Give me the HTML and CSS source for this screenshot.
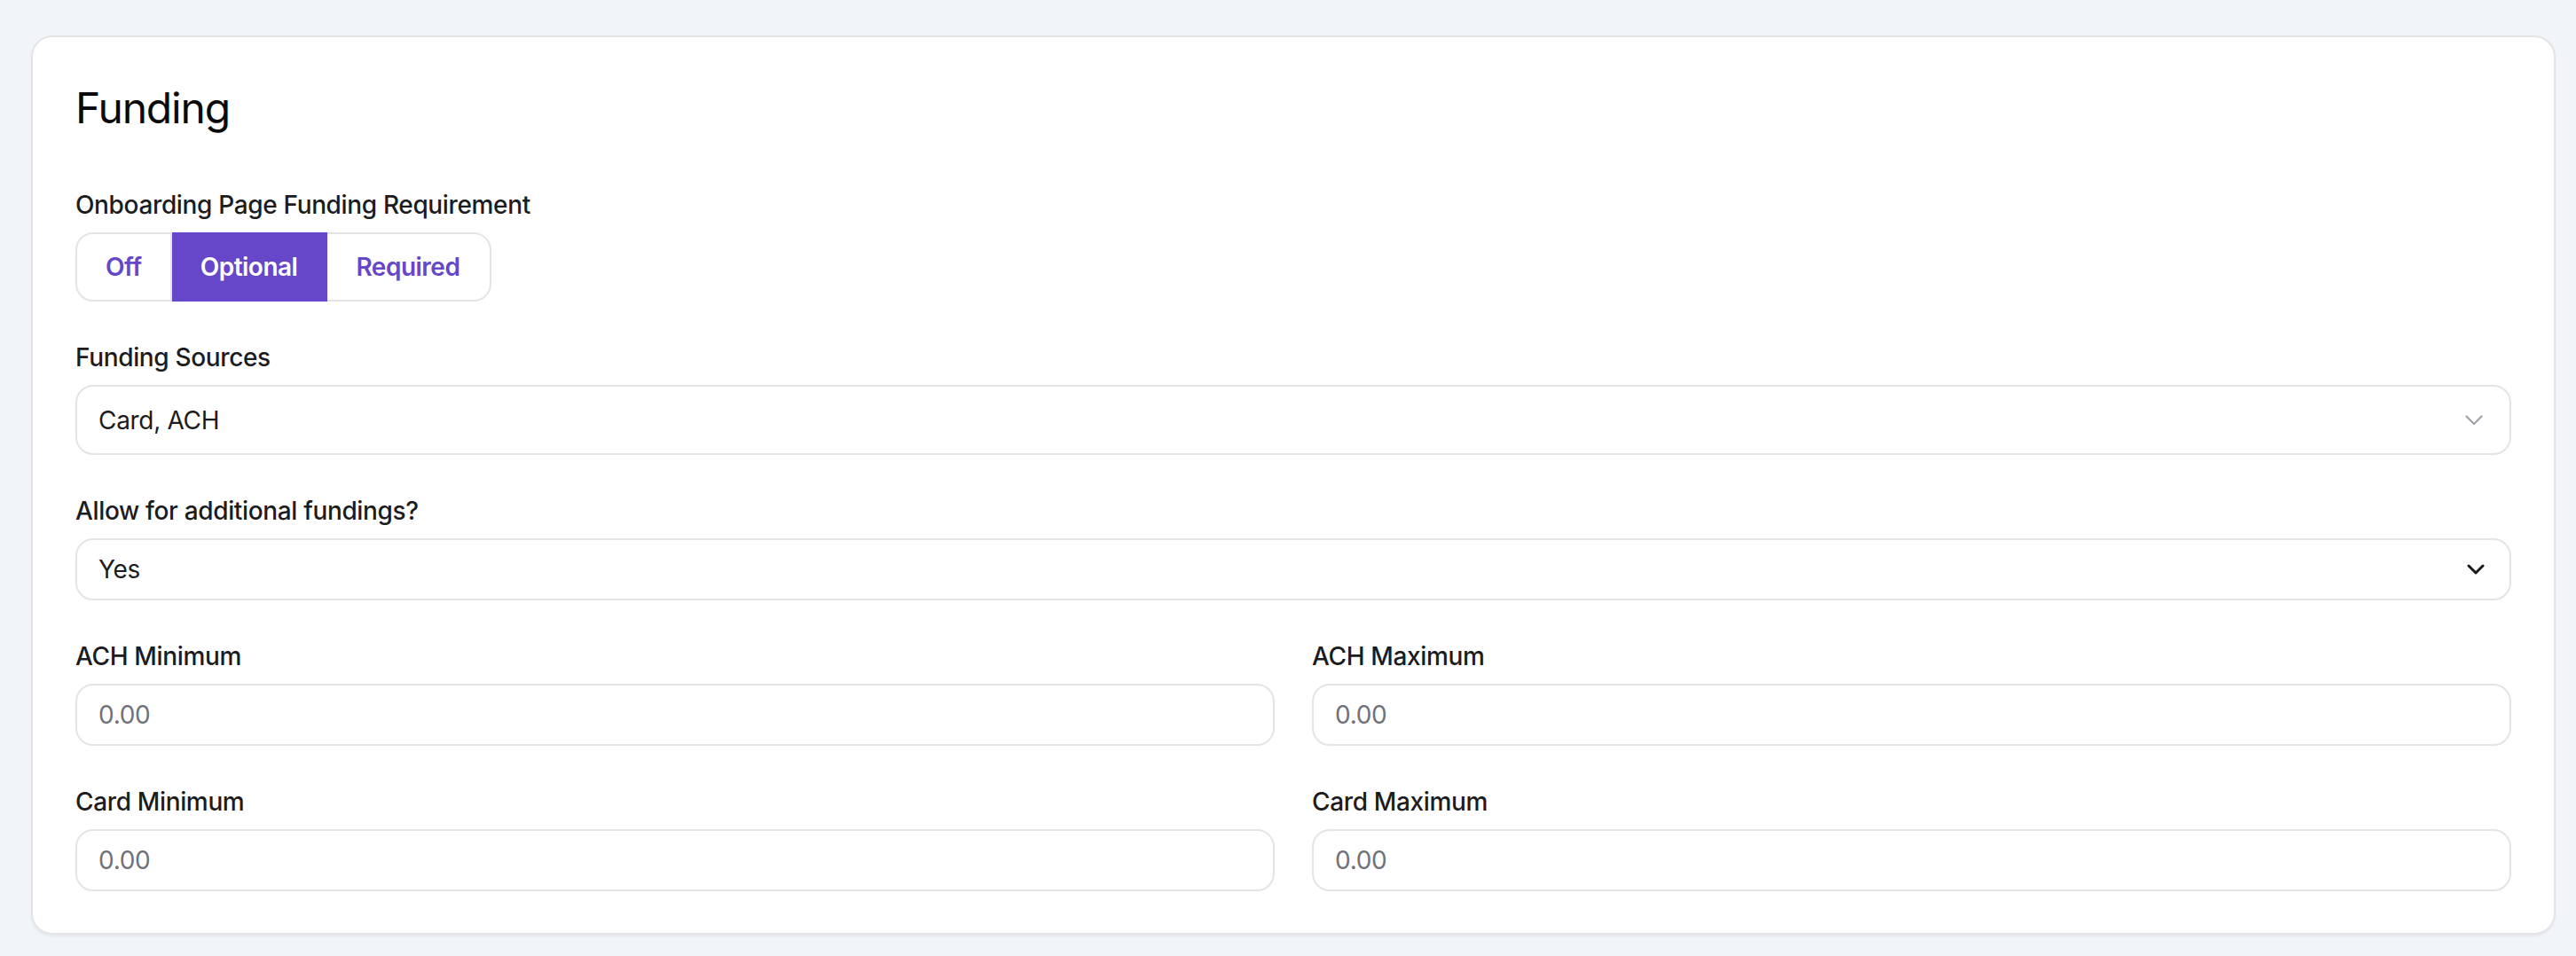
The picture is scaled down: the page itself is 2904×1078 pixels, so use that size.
FILE: index.html
```html
<!DOCTYPE html>
<html lang="en">
    <head>
        <title>Funding</title>
        <link rel="stylesheet" href="styles.css">
    </head>
    <body>
        <div class="card">
            <h2 class="card-title">Funding</h2>
            <form class="fields" name="fundingform">
                <div class="field">
                    <label class="field-label">Onboarding Page Funding Requirement</label>
                    <div class="toggle">
                        <button type="button" class="toggle-btn">Off</button>
                        <button type="button" class="toggle-btn active">Optional</button>
                        <button type="button" class="toggle-btn">Required</button>
                    </div>
                </div>
                <div class="field">
                    <label class="field-label">Funding Sources</label>
                    <div class="multi-select">
                        <span>Card, ACH</span>
                        <svg class="chevron light" width="20" height="12" viewBox="0 0 20 12"><path d="M1.5 1.5 L10 10 L18.5 1.5" fill="none" stroke="currentColor" stroke-width="2.2" stroke-linecap="round" stroke-linejoin="round"/></svg>
                    </div>
                </div>
                <div class="field">
                    <label class="field-label" for="additional">Allow for additional fundings?</label>
                    <div class="select-wrap">
                        <select id="additional" class="select">
                            <option>Yes</option>
                            <option>No</option>
                        </select>
                        <svg class="chevron dark" width="20" height="12" viewBox="0 0 20 12"><path d="M2 2 L10 10 L18 2" fill="none" stroke="currentColor" stroke-width="3" stroke-linecap="round" stroke-linejoin="round"/></svg>
                    </div>
                </div>
                <div class="row">
                    <div class="field">
                        <label class="field-label" for="ach_min">ACH Minimum</label>
                        <input type="text" id="ach_min" class="input" placeholder="0.00">
                    </div>
                    <div class="field">
                        <label class="field-label" for="ach_max">ACH Maximum</label>
                        <input type="text" id="ach_max" class="input" placeholder="0.00">
                    </div>
                </div>
                <div class="row">
                    <div class="field">
                        <label class="field-label" for="card_min">Card Minimum</label>
                        <input type="text" id="card_min" class="input" placeholder="0.00">
                    </div>
                    <div class="field">
                        <label class="field-label" for="card_max">Card Maximum</label>
                        <input type="text" id="card_max" class="input" placeholder="0.00">
                    </div>
                </div>
            </form>
        </div>
    </body>
</html>
```

FILE: styles.css
```css
* {
box-sizing: border-box;
}
body {
margin: 0;
padding: 40px 23px 24px 35px;
background-color: #f1f4f9;
font-family: Inter, "Noto Sans", sans-serif;
color: #1c1c1f;
}
.card {
background-color: white;
border: 2px solid #e4e4e7;
border-radius: 24px;
padding: 48px 48px 47px 48px;
box-shadow: 0 2px 3px rgba(0, 0, 0, 0.05);
}
.card-title {
margin: 0 0 57px 0;
font-size: 48px;
line-height: 64px;
font-weight: 400;
letter-spacing: -1.2px;
color: #0a0a0a;
}
.fields {
display: flex;
flex-direction: column;
gap: 43px;
}
.field {
display: flex;
flex-direction: column;
}
.field-label {
font-size: 28px;
line-height: 40px;
font-weight: 500;
letter-spacing: -0.35px;
margin-bottom: 11px;
color: #1c1c1f;
}
.row {
display: grid;
grid-template-columns: 1fr 1fr;
gap: 42px;
}

/* segmented toggle */
.toggle {
display: flex;
align-self: flex-start;
height: 78px;
}
.toggle-btn {
font-family: inherit;
font-size: 28px;
font-weight: 600;
letter-spacing: -0.5px;
color: #6647c9;
background-color: white;
border: 2px solid #e4e4e7;
border-left: none;
padding: 0 32px;
cursor: pointer;
}
.toggle-btn:first-child {
border-left: 2px solid #e4e4e7;
border-radius: 20px 0 0 20px;
}
.toggle-btn:last-child {
border-radius: 0 20px 20px 0;
padding-right: 34px;
}
.toggle-btn.active {
background-color: #6647c9;
border-color: #6647c9;
color: white;
}

/* selects */
.multi-select {
display: flex;
align-items: center;
justify-content: space-between;
height: 79px;
padding: 0 30px 0 24px;
border: 2px solid #e4e4e7;
border-radius: 20px;
font-size: 28px;
letter-spacing: -0.3px;
color: #1c1c1f;
}
.select-wrap {
position: relative;
}
.select {
width: 100%;
height: 70px;
padding: 0 24px;
border: 2px solid #e4e4e7;
border-radius: 20px;
background-color: white;
font-family: inherit;
font-size: 28px;
letter-spacing: -0.3px;
color: #1c1c1f;
appearance: none;
-webkit-appearance: none;
outline: none;
}
.chevron.light {
color: #a1a1aa;
}
.chevron.dark {
color: #18181b;
position: absolute;
right: 30px;
top: 29px;
pointer-events: none;
}

/* text inputs */
.input {
width: 100%;
height: 70px;
padding: 0 24px;
border: 2px solid #e4e4e7;
border-radius: 20px;
font-family: inherit;
font-size: 28px;
letter-spacing: -0.3px;
color: #1c1c1f;
outline: none;
}
.input::placeholder {
color: #71717a;
}
```
